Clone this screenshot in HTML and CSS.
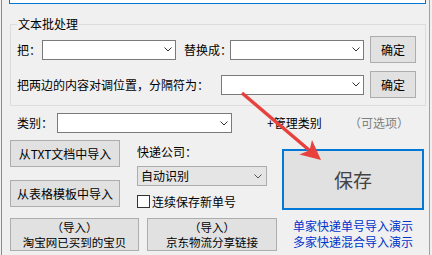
FILE: index.html
```html
<!DOCTYPE html>
<html lang="zh-CN">
<head>
<meta charset="utf-8">
<link rel="stylesheet" href="styles.css">
</head>
<body>
<div class="window">
  <div class="topbox"></div>
  <fieldset class="group">
    <legend>文本批处理</legend>
    <div class="grow">
      <span class="lbl w-ba">把：</span>
      <div class="combo w134"><svg class="chev" width="8" height="5" viewBox="0 0 8 5"><path d="M0.5 0.5 L4 4 L7.5 0.5" fill="none" stroke="#333" stroke-width="1"/></svg></div>
      <span class="lbl w-rep">替换成：</span>
      <div class="combo w134"><svg class="chev" width="8" height="5" viewBox="0 0 8 5"><path d="M0.5 0.5 L4 4 L7.5 0.5" fill="none" stroke="#333" stroke-width="1"/></svg></div>
      <button class="btn ok">确定</button>
    </div>
    <div class="grow second">
      <span class="lbl w-swap">把两边的内容对调位置，分隔符为：</span>
      <div class="combo w143"><svg class="chev" width="8" height="5" viewBox="0 0 8 5"><path d="M0.5 0.5 L4 4 L7.5 0.5" fill="none" stroke="#333" stroke-width="1"/></svg></div>
      <button class="btn ok">确定</button>
    </div>
  </fieldset>
  <div class="catrow">
    <span class="lbl w-cat">类别：</span>
    <div class="combo cat"><svg class="chev" width="8" height="5" viewBox="0 0 8 5"><path d="M0.5 0.5 L4 4 L7.5 0.5" fill="none" stroke="#333" stroke-width="1"/></svg></div>
    <span class="manage">+管理类别</span>
    <span class="optional">（可选项）</span>
  </div>
  <div class="main">
    <div class="leftblock">
      <div class="cols">
        <div class="col1">
          <button class="btn imp">从TXT文档中导入</button>
          <button class="btn imp second-imp">从表格模板中导入</button>
        </div>
        <div class="col2">
          <div class="lbl courier">快递公司：</div>
          <div class="combo ro"><span>自动识别</span><svg class="chev" width="8" height="5" viewBox="0 0 8 5"><path d="M0.5 0.5 L4 4 L7.5 0.5" fill="none" stroke="#555" stroke-width="1"/></svg></div>
          <div class="check"><span class="box"></span><span>连续保存新单号</span></div>
        </div>
      </div>
      <div class="bottombtns">
        <button class="btn two taobao"><span class="ln">（导入）</span><span class="ln">淘宝网已买到的宝贝</span></button>
        <button class="btn two jd"><span class="ln">（导入）</span><span class="ln">京东物流分享链接</span></button>
      </div>
    </div>
    <div class="rightblock">
      <button class="save">保存</button>
      <a class="link first">单家快递单号导入演示</a>
      <a class="link">多家快递混合导入演示</a>
    </div>
  </div>
  <svg class="arrow" width="432" height="255" viewBox="0 0 432 255">
    <line x1="242" y1="93" x2="309" y2="150" stroke="#e8403c" stroke-width="3.5"/>
    <polygon points="321,160 299.5,154.5 309.6,150.3 312,140" fill="#e8403c"/>
  </svg>
</div>
</body>
</html>
```
FILE: styles.css
```css
html, body {
  margin: 0;
  padding: 0;
  background: #f0f0f0;
}
body {
  width: 432px;
  height: 255px;
  overflow: hidden;
  font-family: "Noto Sans CJK SC", "Microsoft YaHei", sans-serif;
  font-size: 12px;
  color: #000;
}
.window {
  position: relative;
  margin-left: 1px;
  width: 427px;
  height: 255px;
  border-left: 1px solid #8c8c8c;
  border-right: 1px solid #a0a0a0;
}
.topbox {
  margin-left: 7px;
  width: 415px;
  height: 3px;
  border: 1px solid #0078d7;
  border-top: none;
  background: #fff;
}
.group {
  margin: 12px 0 0 8px;
  padding: 4px 0 7px 0;
  width: 416px;
  box-sizing: border-box;
  border: 1px solid #dcdcdc;
  min-inline-size: 0;
}
.group legend {
  margin-left: 6px;
  padding: 0 1px;
  line-height: 16px;
  font-size: 12px;
}
.grow {
  display: flex;
  align-items: center;
  height: 27px;
  padding-left: 6px;
}
.grow.second {
  margin-top: 8px;
}
.lbl {
  line-height: 16px;
  white-space: nowrap;
  flex: none;
}
.w-ba { width: 25px; }
.w-rep { width: 46px; margin-left: 8px; }
.w-swap { width: 204px; }
.w-cat { width: 40px; }
.combo {
  box-sizing: border-box;
  height: 20px;
  background: #fff;
  border: 1px solid #7a7a7a;
  display: flex;
  align-items: center;
  justify-content: flex-end;
  padding-right: 3px;
  flex: none;
}
.w134 { width: 134px; }
.w143 { width: 143px; }
.chev { display: block; }
.btn {
  font-family: inherit;
  font-size: 12px;
  color: #000;
  background: #e1e1e1;
  border: 1px solid #adadad;
  padding: 0;
  margin: 0;
  box-sizing: border-box;
  flex: none;
}
.ok {
  width: 46px;
  height: 27px;
  margin-left: 6px;
  line-height: 16px;
}
.catrow {
  display: flex;
  align-items: center;
  height: 20px;
  margin-top: 7px;
  padding-left: 15px;
}
.combo.cat {
  width: 175px;
}
.manage {
  margin-left: 35px;
  width: 82px;
  line-height: 16px;
  white-space: nowrap;
}
.optional {
  color: #808080;
  line-height: 16px;
  white-space: nowrap;
}
.main {
  display: flex;
  margin-top: 7px;
  padding-left: 8px;
}
.leftblock {
  width: 267px;
  flex: none;
}
.cols {
  display: flex;
  align-items: flex-start;
}
.col1 {
  width: 110px;
  display: flex;
  flex-direction: column;
}
.imp {
  width: 110px;
  height: 27px;
  line-height: 16px;
}
.second-imp {
  margin-top: 13px;
}
.col2 {
  margin-left: 17px;
  width: 130px;
  display: flex;
  flex-direction: column;
}
.courier {
  margin-top: 2px;
  line-height: 20px;
}
.combo.ro {
  margin-top: 4px;
  width: 130px;
  background: #e5e5e5;
  border-color: #adadad;
  justify-content: space-between;
  padding-left: 3px;
  padding-right: 4px;
  line-height: 16px;
}
.check {
  margin-top: 9px;
  height: 13px;
  display: flex;
  align-items: center;
  gap: 2px;
  line-height: 16px;
  white-space: nowrap;
}
.check .box {
  width: 13px;
  height: 13px;
  box-sizing: border-box;
  border: 1px solid #333;
  background: #fff;
  flex: none;
}
.bottombtns {
  display: flex;
  margin-top: 10px;
}
.two {
  height: 33px;
  padding: 0;
  display: flex;
  flex-direction: column;
  align-items: center;
  justify-content: center;
  font-size: 11.5px;
}
.two .ln {
  display: block;
  line-height: 16.8px;
  height: 16.8px;
  flex: none;
}
.two .ln + .ln {
  margin-top: -2px;
}
.taobao { width: 129px; }
.jd { width: 130px; margin-left: 8px; }
.rightblock {
  margin-left: 5px;
  width: 142px;
  padding-top: 9px;
  display: flex;
  flex-direction: column;
  align-items: center;
  flex: none;
}
.save {
  width: 142px;
  height: 61px;
  box-sizing: border-box;
  border: 2px solid #0078d7;
  background: #e1e1e1;
  font-family: inherit;
  font-size: 19px;
  color: #444;
  padding: 0;
}
.link {
  color: #0033cc;
  line-height: 16px;
  white-space: nowrap;
}
.link.first {
  margin-top: 8px;
}
.arrow {
  position: absolute;
  left: -2px;
  top: 0;
  pointer-events: none;
}
```
